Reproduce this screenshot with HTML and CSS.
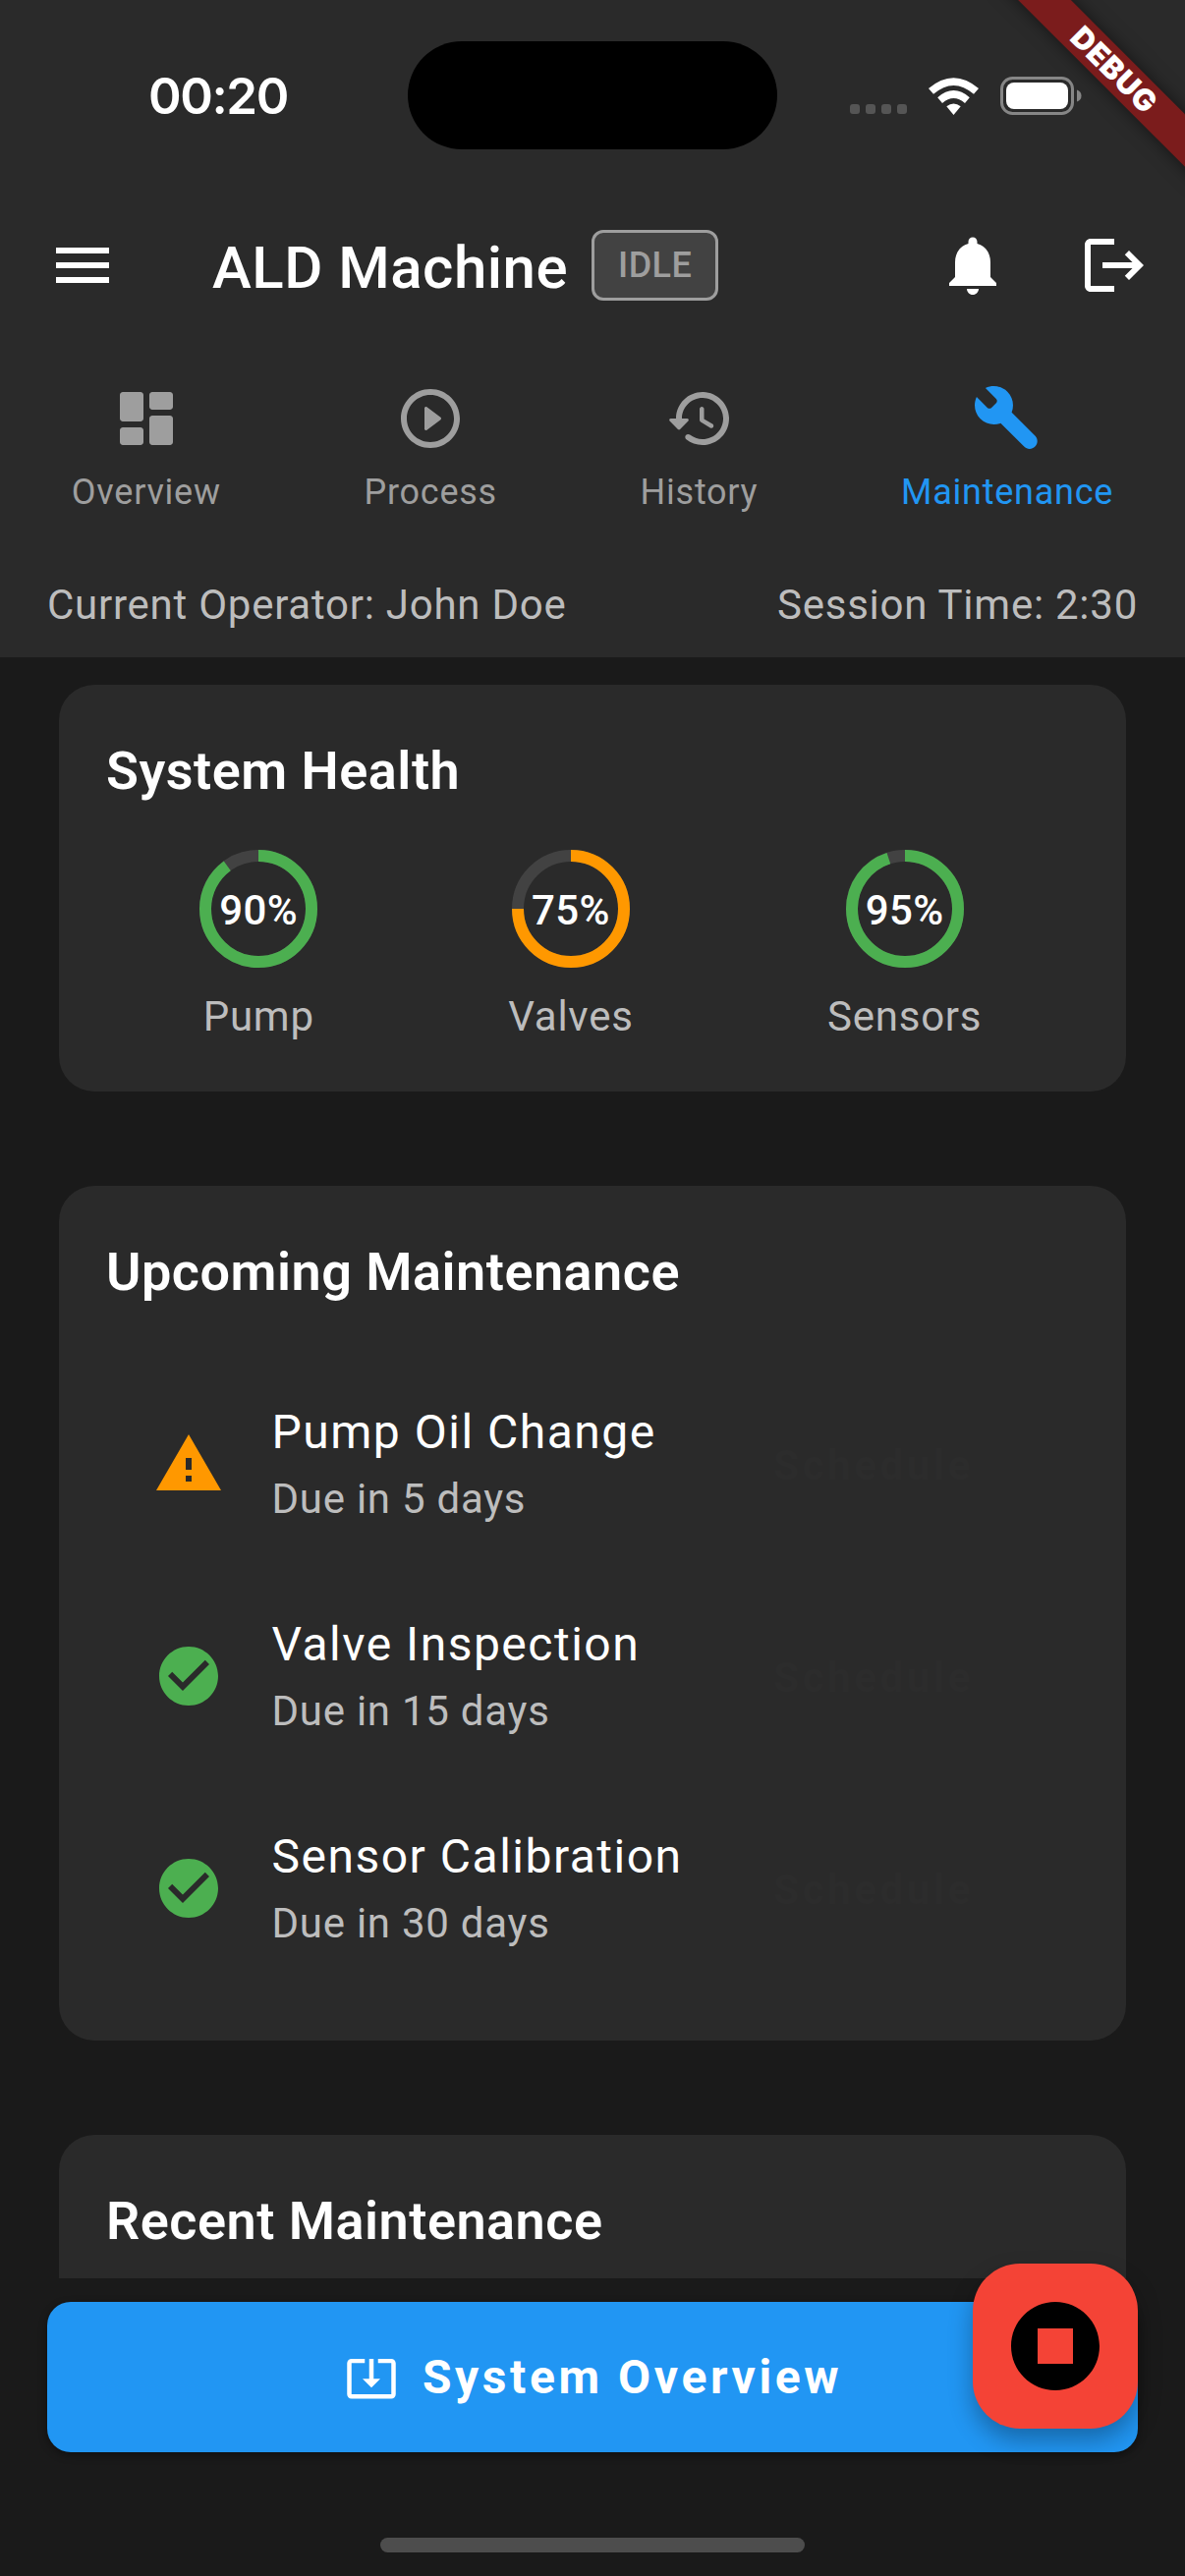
FILE: index.html
```html
<!DOCTYPE html>
<html lang="en">
<head>
<meta charset="utf-8">
<title>ALD Machine</title>
<link rel="stylesheet" href="styles.css">
</head>
<body>
<div class="screen">
  <header class="header">
    <div class="status">
      <div class="clock">00:20</div>
      <div class="island"></div>
      <div class="signals">
        <div class="dots"><i></i><i></i><i></i><i></i></div>
        <svg class="wifi" viewBox="0 0 51 38">
          <path d="M25.5 38 L18.3 29.2 Q25.5 23.6 32.7 29.2 Z"/>
          <path d="M9.2 20.2 Q25.5 6 41.8 20.2 L37 26 Q25.5 15.800 14 26 Z"/>
          <path d="M0 11 Q25.5 -10.6 51 11 L46 16.8 Q25.5 -1 5 16.8 Z"/>
        </svg>
        <svg class="battery" viewBox="0 0 83 39">
          <rect x="1.5" y="1.5" width="72" height="36" rx="11" fill="none" stroke="#868686" stroke-width="3"/>
          <rect x="6" y="6" width="63" height="27" rx="8" fill="#fff"/>
          <path d="M78 13.5q4.500 1.500 4.500 6t-4.500 6z" fill="#868686"/>
        </svg>
      </div>
    </div>
    <div class="appbar">
      <svg class="icon" viewBox="0 0 24 24"><path d="M3 18h18v-2H3v2zm0-5h18v-2H3v2zm0-7v2h18V6H3z"/></svg>
      <h1 class="title">ALD Machine</h1>
      <span class="badge">IDLE</span>
      <div class="actions">
        <svg class="icon" viewBox="0 0 24 24"><path d="M12 22c1.100 0 2-.9 2-2h-4c0 1.100.89 2 2 2zm6-6v-5c0-3.070-1.640-5.640-4.500-6.320V4c0-.83-.67-1.500-1.500-1.500s-1.500.67-1.500 1.500v.68C7.630 5.360 6 7.920 6 11v5l-2 2v1h16v-1l-2-2z"/></svg>
        <svg class="icon" viewBox="0 0 24 24"><path d="M17 7l-1.410 1.410L18.170 11H8v2h10.170l-2.580 2.580L17 17l5-5zM4 5h8V3H4c-1.100 0-2 .9-2 2v14c0 1.100.9 2 2 2h8v-2H4V5z"/></svg>
      </div>
    </div>
    <nav class="tabs">
      <div class="tab">
        <svg class="icon" viewBox="0 0 24 24"><path d="M4 13h6c.55 0 1-.45 1-1V4c0-.55-.45-1-1-1H4c-.55 0-1 .45-1 1v8c0 .55.45 1 1 1zm0 8h6c.55 0 1-.45 1-1v-4c0-.55-.45-1-1-1H4c-.55 0-1 .45-1 1v4c0 .55.45 1 1 1zm10 0h6c.55 0 1-.45 1-1v-8c0-.55-.45-1-1-1h-6c-.55 0-1 .45-1 1v8c0 .55.45 1 1 1zM13 4v4c0 .55.45 1 1 1h6c.55 0 1-.45 1-1V4c0-.55-.45-1-1-1h-6c-.55 0-1 .45-1 1z"/></svg>
        <span>Overview</span>
      </div>
      <div class="tab">
        <svg class="icon" viewBox="0 0 24 24"><path d="M10.800 15.900l4.670-3.500c.27-.2.27-.6 0-.8L10.800 8.100c-.33-.25-.8-.01-.8.400v7c0 .41.47.65.8.4zM12 2C6.480 2 2 6.480 2 12s4.480 10 10 10 10-4.480 10-10S17.520 2 12 2zm0 18c-4.410 0-8-3.590-8-8s3.590-8 8-8 8 3.590 8 8-3.590 8-8 8z"/></svg>
        <span>Process</span>
      </div>
      <div class="tab">
        <svg class="icon" viewBox="0 0 24 24"><path d="M13.260 3C8.170 2.860 4 6.950 4 12H2.210c-.45 0-.67.54-.35.85l2.790 2.800c.2.2.51.2.71 0l2.790-2.800c.31-.31.09-.85-.36-.85H6c0-3.900 3.180-7.050 7.100-7 3.720.05 6.850 3.180 6.900 6.900.05 3.910-3.100 7.100-7 7.100-1.610 0-3.100-.55-4.280-1.480-.4-.31-.96-.28-1.320.08-.42.42-.39 1.130.08 1.490C9 20.290 10.910 21 13 21c5.050 0 9.140-4.170 9-9.260-.13-4.690-4.050-8.610-8.740-8.740zm-.51 5c-.41 0-.75.34-.75.75v3.680c0 .35.19.68.49.86l3.120 1.850c.36.21.82.09 1.030-.26.21-.36.09-.82-.26-1.030l-2.880-1.710v-3.400c0-.4-.34-.74-.75-.74z"/></svg>
        <span>History</span>
      </div>
      <div class="tab tab-active">
        <svg class="icon" viewBox="0 0 24 24"><path d="M12.090 2.910C10.080.9 7.070.49 4.650 1.670L8.280 5.300c.39.39.39 1.020 0 1.410L6.690 8.300c-.39.4-1.020.4-1.410 0L1.650 4.670C.48 7.100.89 10.090 2.900 12.100c1.860 1.860 4.580 2.350 6.890 1.480l7.960 7.960c1.030 1.030 2.690 1.030 3.710 0 1.030-1.030 1.030-2.690 0-3.710L13.540 9.900c.92-2.340.44-5.100-1.450-6.990z"/></svg>
        <span>Maintenance</span>
      </div>
    </nav>
    <div class="session">
      <span>Current Operator: John Doe</span>
      <span>Session Time: 2:30</span>
    </div>
  </header>

  <main class="content">
    <section class="card">
      <h2 class="card-title">System Health</h2>
      <div class="gauges">
        <div class="gauge">
          <div class="ring">
            <svg viewBox="0 0 120 120"><circle class="track" cx="60" cy="60" r="54"/><circle class="value ok" cx="60" cy="60" r="54" pathLength="100" stroke-dasharray="90 100"/></svg>
            <b>90%</b>
          </div>
          <span>Pump</span>
        </div>
        <div class="gauge">
          <div class="ring">
            <svg viewBox="0 0 120 120"><circle class="track" cx="60" cy="60" r="54"/><circle class="value warn" cx="60" cy="60" r="54" pathLength="100" stroke-dasharray="75 100"/></svg>
            <b>75%</b>
          </div>
          <span>Valves</span>
        </div>
        <div class="gauge">
          <div class="ring">
            <svg viewBox="0 0 120 120"><circle class="track" cx="60" cy="60" r="54"/><circle class="value ok" cx="60" cy="60" r="54" pathLength="100" stroke-dasharray="95 100"/></svg>
            <b>95%</b>
          </div>
          <span>Sensors</span>
        </div>
      </div>
    </section>

    <section class="card">
      <h2 class="card-title">Upcoming Maintenance</h2>
      <ul class="tasks">
        <li class="task">
          <svg class="icon icon-warn" viewBox="0 0 24 24"><path d="M1 21h22L12 2 1 21zm12-3h-2v-2h2v2zm0-4h-2v-4h2v4z"/></svg>
          <div class="task-text"><strong>Pump Oil Change</strong><small>Due in 5 days</small></div>
          <button class="schedule">Schedule</button>
        </li>
        <li class="task">
          <svg class="icon icon-ok" viewBox="0 0 24 24"><path d="M12 2C6.480 2 2 6.480 2 12s4.480 10 10 10 10-4.480 10-10S17.520 2 12 2zm-2 15l-5-5 1.410-1.410L10 14.170l7.590-7.590L19 8l-9 9z"/></svg>
          <div class="task-text"><strong>Valve Inspection</strong><small>Due in 15 days</small></div>
          <button class="schedule">Schedule</button>
        </li>
        <li class="task">
          <svg class="icon icon-ok" viewBox="0 0 24 24"><path d="M12 2C6.480 2 2 6.480 2 12s4.480 10 10 10 10-4.480 10-10S17.520 2 12 2zm-2 15l-5-5 1.410-1.410L10 14.170l7.590-7.590L19 8l-9 9z"/></svg>
          <div class="task-text"><strong>Sensor Calibration</strong><small>Due in 30 days</small></div>
          <button class="schedule">Schedule</button>
        </li>
      </ul>
    </section>

    <section class="card card-cut">
      <h2 class="card-title">Recent Maintenance</h2>
    </section>
  </main>

  <footer class="footer">
    <button class="overview">
      <svg viewBox="0 0 24 24"><path d="M12 16.500l4-4h-3v-9h-2v9H8l4 4zm9-13h-6v1.990h6v14.030H3V5.490h6V3.500H3c-1.100 0-2 .9-2 2v14c0 1.100.9 2 2 2h18c1.100 0 2-.9 2-2v-14c0-1.100-.9-2-2-2z"/></svg>
      <span>System Overview</span>
    </button>
    <div class="home-bar"></div>
  </footer>

  <button class="fab" aria-label="Stop">
    <svg viewBox="0 0 24 24"><path d="M12 2C6.480 2 2 6.480 2 12s4.480 10 10 10 10-4.480 10-10S17.520 2 12 2zm4 14H8V8h8v8z"/></svg>
  </button>
  <div class="ribbon">DEBUG</div>
</div>
</body>
</html>
```
FILE: styles.css
```css
* { box-sizing: border-box; }

body {
  margin: 0;
  background: #1a1a1a;
  color: #fff;
  font-family: Roboto, "Liberation Sans", sans-serif;
}

h1, h2, ul { margin: 0; padding: 0; }

button { border: 0; font-family: inherit; padding: 0; }

svg { display: block; fill: currentColor; flex: none; }

.screen {
  position: relative;
  width: 1206px;
  height: 2622px;
  overflow: hidden;
  display: flex;
  flex-direction: column;
}

.icon { width: 72px; height: 72px; }

/* Header */
.header { height: 669px; background: #2a2a2a; flex: none; }

.status {
  height: 186px;
  padding-top: 42px;
  display: grid;
  grid-template-columns: 415px 376px 1fr;
}

.clock {
  padding-left: 151px;
  font: 600 51px/112px Inter, sans-serif;
  letter-spacing: -1.4px;
}

.island { height: 110px; border-radius: 55px; background: #000; }

.signals { display: flex; padding: 36px 0 0 74px; align-items: flex-start; }

.dots { display: flex; gap: 6px; padding-top: 28px; width: 80px; }
.dots i { width: 10px; height: 10px; border-radius: 3px; background: #555; }

.wifi { width: 51px; height: 38px; margin-top: 1px; }
.battery { width: 83px; height: 39px; margin-left: 22px; }

.appbar {
  height: 168px;
  padding: 0 36px 0 48px;
  display: flex;
  align-items: center;
}

.title {
  margin-left: 96px;
  font-size: 60px;
  font-weight: 500;
  letter-spacing: 0.5px;
  line-height: 84px;
  white-space: nowrap;
  padding-top: 5px;
}

.badge {
  margin-left: 24px;
  height: 72px;
  padding: 0 24px;
  border: 3px solid #9e9e9e;
  border-radius: 12px;
  background: #424242;
  color: #9e9e9e;
  font-size: 36px;
  font-weight: 500;
  letter-spacing: 0.4px;
  line-height: 66px;
}

.actions { margin-left: auto; display: flex; gap: 72px; }

.tabs {
  display: flex;
  justify-content: space-around;
  padding-top: 36px;
  height: 207px;
}

.tab {
  display: flex;
  flex-direction: column;
  align-items: center;
  color: #9e9e9e;
  font-size: 36px;
  letter-spacing: 0.75px;
  line-height: 48px;
}
.tab span { margin-top: 15px; }
.tab-active { color: #2196f3; }

.session {
  display: flex;
  justify-content: space-between;
  padding: 25px 48px 0;
  color: #bdbdbd;
  font-size: 42px;
  letter-spacing: 0.75px;
  line-height: 60px;
}

/* Scrolling content */
.content {
  height: 1650px;
  flex: none;
  overflow: hidden;
  padding: 28px 60px 0;
  display: flex;
  flex-direction: column;
  gap: 96px;
}

.card {
  flex: none;
  background: #2a2a2a;
  border-radius: 36px;
  padding: 49px 48px 48px;
  height: 414px;
}
.card + .card { height: 870px; }

.card-title {
  font-size: 54px;
  font-weight: 600;
  letter-spacing: 0.5px;
  line-height: 78px;
}

.gauges { display: flex; justify-content: space-around; margin-top: 41px; }

.gauge {
  display: flex;
  flex-direction: column;
  align-items: center;
  color: #bdbdbd;
  font-size: 42px;
  letter-spacing: 0.75px;
  line-height: 60px;
}
.gauge > span { margin-top: 20px; padding: 0 4px; }

.ring { width: 120px; height: 120px; display: grid; place-items: center; }
.ring > * { grid-area: 1 / 1; }
.ring svg { width: 120px; height: 120px; transform: rotate(-90deg); fill: none; stroke-width: 12; }
.ring b { color: #fff; font-weight: 500; letter-spacing: 0.4px; padding-top: 3px; }

.track { stroke: #424242; }
.ok { stroke: #4caf50; }
.warn { stroke: #ff9800; }

.tasks { list-style: none; margin-top: 48px; }

.task { height: 216px; padding: 0 48px; display: flex; align-items: center; }
.icon-warn { color: #ff9800; }
.icon-ok { color: #4caf50; }

.task-text {
  margin-left: 48.500px;
  padding-bottom: 2px;
  display: flex;
  flex-direction: column;
  gap: 2px;
  white-space: nowrap;
}
.task-text strong { font-size: 48px; font-weight: 400; letter-spacing: 1.5px; line-height: 72px; }
.task-text small { color: #bdbdbd; font-size: 42px; letter-spacing: 0.75px; line-height: 60px; }

.schedule {
  margin-left: auto;
  margin-right: 59px;
  padding-top: 2px;
  background: none;
  color: #2c2c2c;
  font-size: 42px;
  font-weight: 700;
  letter-spacing: 3.600px;
}

/* Footer */
.footer { padding: 24px 48px 0; }

.overview {
  width: 100%;
  height: 153px;
  padding-left: 2px;
  border-radius: 24px;
  background: #2196f3;
  color: #fff;
  box-shadow: 0 3px 8px rgba(0, 0, 0, 0.4);
  display: flex;
  align-items: center;
  justify-content: center;
  gap: 25px;
  font-size: 48px;
  font-weight: 700;
  letter-spacing: 3.600px;
}
.overview svg { width: 54px; height: 54px; }

.home-bar {
  width: 432px;
  height: 15px;
  margin: 87px auto 0;
  border-radius: 8px;
  background: #4d4d4d;
}

/* Floating layers */
.fab {
  position: absolute;
  right: 48px;
  bottom: 150px;
  width: 168px;
  height: 168px;
  border-radius: 48px;
  background: #f44336;
  color: #000;
  display: grid;
  place-items: center;
  box-shadow: 0 12px 24px rgba(0, 0, 0, 0.3);
}
.fab svg { width: 108px; height: 108px; }

.ribbon {
  position: absolute;
  left: 934px;
  top: 52px;
  width: 400px;
  height: 38px;
  transform: rotate(45deg);
  background: #7b1c1c;
  box-shadow: 0 0 18px rgba(0, 0, 0, 0.5);
  text-align: center;
  font: 900 30.600px/38px Inter, sans-serif;
  letter-spacing: 0.6px;
}
```
